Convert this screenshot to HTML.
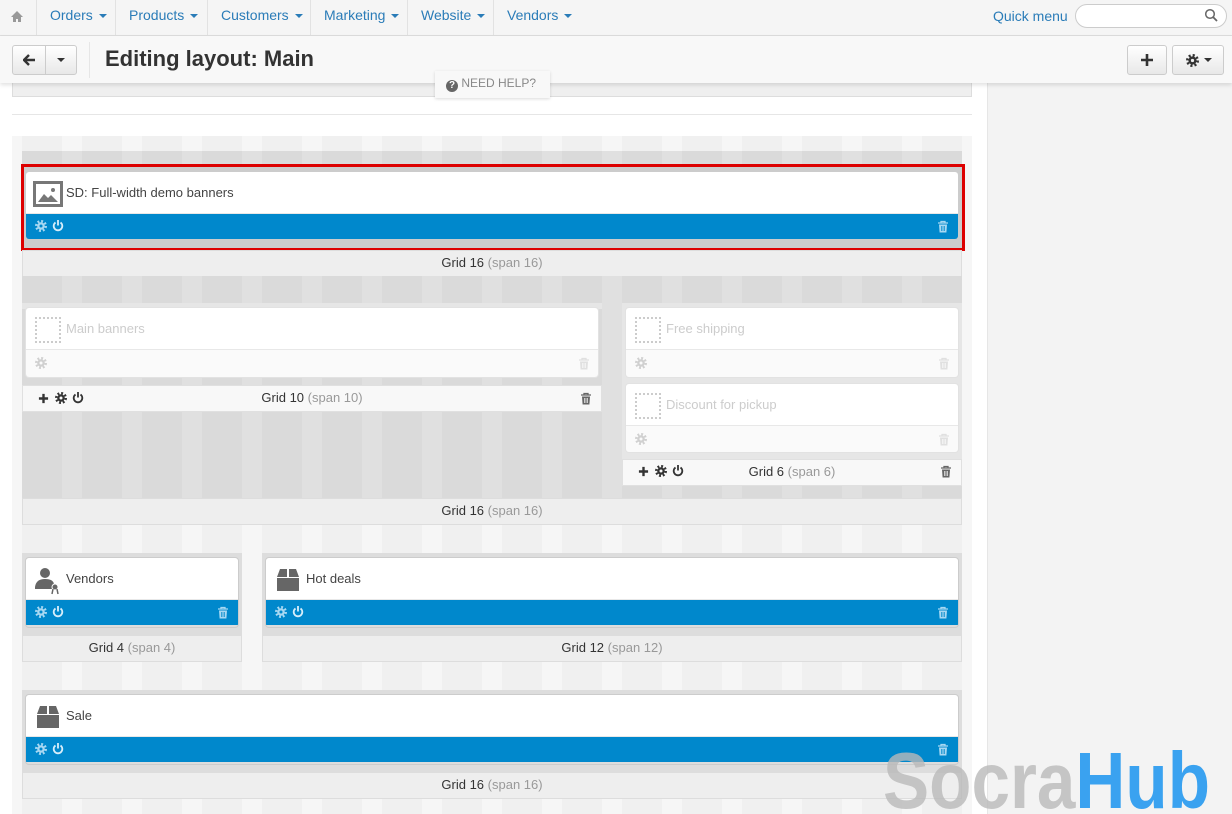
<!DOCTYPE html>
<html><head><meta charset="utf-8"><style>
*{box-sizing:border-box;margin:0;padding:0}
body{width:1232px;height:814px;overflow:hidden;font-family:"Liberation Sans",sans-serif;font-size:13px;color:#333;background:#fff;position:relative}
.abs{position:absolute}
.nav{left:0;top:0;width:1232px;height:36px;background:#f5f5f5;border-bottom:1px solid #ddd}
.nav .it{position:absolute;top:0;height:35px;line-height:31px;color:#2a7cb8;font-size:14px;border-left:1px solid #e2e2e2;padding:0 13px}
.caret{display:inline-block;width:0;height:0;border-left:4px solid transparent;border-right:4px solid transparent;border-top:4px solid #2a7cb8;vertical-align:middle;margin-left:6px}
.tb{left:0;top:36px;width:1232px;height:47px;background:#f8f8f8;box-shadow:0 2px 4px rgba(0,0,0,.12);z-index:3}
.btn{position:absolute;border:1px solid #ccc;border-radius:3px;background:linear-gradient(#fff,#e8e8e8);height:30px}
.side{left:987px;top:83px;width:245px;height:731px;background:#f3f3f3;border-left:1px solid #e6e6e6}
.stripes{background:repeating-linear-gradient(90deg,#f0f0f0 0 40px,#f6f6f6 40px 60px)}
.dstripes{background:repeating-linear-gradient(90deg,#dadada 0 40px,#e0e0e0 40px 60px)}
.lbl{position:absolute;background:#eee;border:1px solid #ddd;text-align:center;font-size:13px;color:#333;line-height:23px;height:27px}
.lbl span{color:#999}
.blk{position:absolute;border-radius:3px;overflow:hidden;box-shadow:0 0 0 1px #ccc}
.blk .hd{background:#fff;height:42px;position:relative;border-bottom:1px solid #e8e8e8}
.blk .hd .t{position:absolute;left:40px;top:13px;font-size:13px;color:#444}
.blk .ft{background:#0088cc;height:25px;position:relative}
.blk.dis{box-shadow:0 0 0 1px #e2e2e2}
.blk.dis .t{color:#ccc}
.blk.dis .ft{background:#fafafa;height:27px}
.dash{position:absolute;left:9px;top:9px;width:26px;height:26px;border:2px dotted #ccc}
.ic{position:absolute;top:6px}
.gl{position:absolute;background:#f8f8f8;border:1px solid #e0e0e0;height:27px;line-height:23px;text-align:center}
.gl span{color:#999}
svg.i{position:absolute}
</style></head><body>
<div class="abs nav">
 <svg class="abs" style="left:10px;top:10px" width="14" height="13" viewBox="0 0 14 13"><path d="M7 1L1 7h2v5h3V9h2v3h3V7h2z" fill="#999"/></svg>
 <div class="it" style="left:36px">Orders<i class="caret"></i></div>
 <div class="it" style="left:115px">Products<i class="caret"></i></div>
 <div class="it" style="left:207px">Customers<i class="caret"></i></div>
 <div class="it" style="left:310px">Marketing<i class="caret"></i></div>
 <div class="it" style="left:407px">Website<i class="caret"></i></div>
 <div class="it" style="left:493px">Vendors<i class="caret"></i></div>
 <div class="abs" style="left:993px;top:8px;color:#2a7cb8;font-size:14px">Quick menu</div>
 <div class="abs" style="left:1075px;top:4px;width:152px;height:24px;border:1px solid #ccc;border-radius:12px;background:#fff"></div>
 <svg class="abs" style="left:1204px;top:8px" width="14" height="14" viewBox="0 0 14 14"><circle cx="6" cy="6" r="4.3" fill="none" stroke="#666" stroke-width="1.5"/><path d="M9 9l4 4" stroke="#666" stroke-width="1.8"/></svg>
</div>
<div class="abs tb">
 <div class="btn" style="left:12px;top:9px;width:34px;border-radius:3px 0 0 3px"><svg style="position:absolute;left:10px;top:8px" width="13" height="12" viewBox="0 0 13 12"><path d="M6 1L1 6l5 5M1 6h11" stroke="#333" stroke-width="2.4" fill="none"/></svg></div>
 <div class="btn" style="left:45px;top:9px;width:32px;border-radius:0 3px 3px 0"><i class="caret" style="border-top-color:#333;position:absolute;left:11px;top:12px;margin:0"></i></div>
 <div class="abs" style="left:89px;top:6px;width:1px;height:36px;background:#e6e6e6"></div>
 <div class="abs" style="left:105px;top:10px;font-size:22px;font-weight:bold;color:#333">Editing layout: Main</div>
 <div class="btn" style="left:1127px;top:9px;width:40px"><svg style="position:absolute;left:13px;top:8px" width="12" height="12"><path d="M6 0v12M0 6h12" stroke="#333" stroke-width="2.6"/></svg></div>
 <div class="btn" style="left:1172px;top:9px;width:52px"><svg style="position:absolute;left:13px;top:8px" width="13" height="13" viewBox="0 0 12 12"><circle cx="6" cy="6" r="4.8" fill="none" stroke="#333" stroke-width="2.4" stroke-dasharray="1.9 1.87"/><circle cx="6" cy="6" r="3.8" fill="#333"/><circle cx="6" cy="6" r="1.5" fill="#eee"/></svg><i class="caret" style="border-top-color:#333;position:absolute;left:31px;top:12px;margin:0"></i></div>
</div>
<div class="abs" style="left:435px;top:71px;width:115px;height:27px;background:#f8f8f8;box-shadow:0 1px 3px rgba(0,0,0,.15);z-index:4;font-size:12px;color:#888;line-height:24px;padding-left:11px"><span style="display:inline-block;width:12px;height:12px;border-radius:6px;background:#666;color:#fff;font-size:10px;font-weight:bold;text-align:center;line-height:12px;vertical-align:-1px">?</span> NEED HELP?</div>
<div class="abs side"></div>
<div class="abs" style="left:12px;top:83px;width:960px;height:14px;background:#efefef;border:1px solid #ddd;border-top:0"></div>
<div class="abs" style="left:12px;top:114px;width:960px;height:1px;background:#e6e6e6"></div>
<div class="abs stripes" style="left:12px;top:136px;width:960px;height:678px;background-position:10px 0"></div>

<svg width="0" height="0" style="position:absolute">
<defs>
<symbol id="g" viewBox="0 0 12 12"><circle cx="6" cy="6" r="4.8" fill="none" stroke="currentColor" stroke-width="2.4" stroke-dasharray="1.9 1.87"/><circle cx="6" cy="6" r="3.8" fill="currentColor"/><circle cx="6" cy="6" r="1.5" fill="var(--bg)"/></symbol>
<symbol id="p" viewBox="0 0 12 12"><path d="M3.5 3A4.3 4.3 0 1 0 8.5 3" fill="none" stroke="currentColor" stroke-width="1.8"/><path d="M6 0.5v5.5" stroke="currentColor" stroke-width="1.8"/></symbol>
<symbol id="t" viewBox="0 0 12 12"><path d="M1 2.5h10M4 2.5V1h4v1.5" stroke="currentColor" stroke-width="1.3" fill="none"/><path d="M2 4h8l-.6 8H2.6z" fill="currentColor"/><path d="M4.5 5.5v5M6 5.5v5M7.5 5.5v5" stroke="var(--bg)" stroke-width=".7"/></symbol>
<symbol id="pl" viewBox="0 0 12 12"><path d="M6 1v10M1 6h10" stroke="currentColor" stroke-width="2.6"/></symbol>
</defs></svg>

<!-- row1 -->
<div class="abs dstripes" style="left:22px;top:151px;width:940px;height:100px"></div>
<div class="abs" style="left:21px;top:164px;width:944px;height:87px;border:3px solid #d00;background:#ccc"></div>
<div class="blk" style="left:26px;top:172px;width:932px;height:67px;box-shadow:none">
 <div class="hd"><svg class="ic" style="left:7px;top:9px" width="30" height="26" viewBox="0 0 30 26"><rect x="1.5" y="1.5" width="27" height="23" fill="#fff" stroke="#777" stroke-width="3"/><path d="M5 21l6-8 4 4 3-3 7 7z" fill="#777"/><circle cx="20" cy="9" r="2" fill="#777"/></svg><span class="t">SD: Full-width demo banners</span></div>
 <div class="ft" style="color:#a8d8f2;--bg:#0088cc"><svg class="i" style="left:9px;top:6px" width="12" height="12"><use href="#g"/></svg><svg class="i" style="left:26px;top:5px;color:#d8eefa" width="12" height="13"><use href="#p"/></svg><svg class="i" style="left:911px;top:6px" width="12" height="13"><use href="#t"/></svg></div>
</div>
<div class="lbl" style="left:22px;top:250px;width:940px">Grid 16 <span>(span 16)</span></div>

<!-- row2 -->
<div class="abs dstripes" style="left:22px;top:276px;width:940px;height:223px"></div>
<div class="abs" style="left:22px;top:303px;width:580px;height:6px;background:#e6e6e6"></div>
<div class="blk dis" style="left:26px;top:308px;width:572px;height:69px"><div class="hd"><div class="dash"></div><span class="t">Main banners</span></div><div class="ft" style="color:#d0d0d0;--bg:#fafafa"><svg class="i" style="left:9px;top:7px" width="12" height="12"><use href="#g"/></svg><svg class="i" style="left:552px;top:7px;color:#e0e0e0" width="12" height="13"><use href="#t"/></svg></div></div>
<div class="gl" style="left:22px;top:385px;width:580px;color:#333;--bg:#f8f8f8">Grid 10 <span>(span 10)</span><svg class="i" style="left:15px;top:7px" width="11" height="11"><use href="#pl"/></svg><svg class="i" style="left:32px;top:6px" width="12" height="12"><use href="#g"/></svg><svg class="i" style="left:49px;top:5px" width="12" height="13"><use href="#p"/></svg><svg class="i" style="left:557px;top:6px;color:#666" width="12" height="13"><use href="#t"/></svg></div>
<div class="abs" style="left:622px;top:303px;width:340px;height:182px;background:#e6e6e6"></div>
<div class="blk dis" style="left:626px;top:308px;width:332px;height:69px"><div class="hd"><div class="dash"></div><span class="t">Free shipping</span></div><div class="ft" style="color:#d0d0d0;--bg:#fafafa"><svg class="i" style="left:9px;top:7px" width="12" height="12"><use href="#g"/></svg><svg class="i" style="left:312px;top:7px;color:#e0e0e0" width="12" height="13"><use href="#t"/></svg></div></div>
<div class="blk dis" style="left:626px;top:384px;width:332px;height:68px"><div class="hd"><div class="dash"></div><span class="t">Discount for pickup</span></div><div class="ft" style="color:#d0d0d0;--bg:#fafafa"><svg class="i" style="left:9px;top:7px" width="12" height="12"><use href="#g"/></svg><svg class="i" style="left:312px;top:7px;color:#e0e0e0" width="12" height="13"><use href="#t"/></svg></div></div>
<div class="gl" style="left:622px;top:459px;width:340px;color:#333;--bg:#f8f8f8">Grid 6 <span>(span 6)</span><svg class="i" style="left:15px;top:6px" width="11" height="11"><use href="#pl"/></svg><svg class="i" style="left:32px;top:5px" width="12" height="12"><use href="#g"/></svg><svg class="i" style="left:49px;top:4px" width="12" height="13"><use href="#p"/></svg><svg class="i" style="left:317px;top:5px;color:#666" width="12" height="13"><use href="#t"/></svg></div>
<div class="lbl" style="left:22px;top:498px;width:940px">Grid 16 <span>(span 16)</span></div>

<!-- row3 -->
<div class="abs" style="left:22px;top:553px;width:220px;height:83px;background:#ddd"></div>
<div class="blk" style="left:26px;top:558px;width:212px;height:69px"><div class="hd"><svg class="ic" style="left:8px;top:9px" width="26" height="28" viewBox="0 0 26 28"><circle cx="11" cy="6" r="5" fill="#666"/><path d="M1 20q1-8 10-8t9 6v4H1z" fill="#666"/><circle cx="21" cy="20" r="3" fill="#666" stroke="#fff"/><path d="M19 22l-1 5M23 22l1 5" stroke="#666" stroke-width="1.5"/></svg><span class="t">Vendors</span></div><div class="ft" style="color:#a8d8f2;--bg:#0088cc"><svg class="i" style="left:9px;top:6px" width="12" height="12"><use href="#g"/></svg><svg class="i" style="left:26px;top:5px;color:#d8eefa" width="12" height="13"><use href="#p"/></svg><svg class="i" style="left:191px;top:6px" width="12" height="13"><use href="#t"/></svg></div></div>
<div class="lbl" style="left:22px;top:635px;width:220px">Grid 4 <span>(span 4)</span></div>
<div class="abs" style="left:262px;top:553px;width:700px;height:83px;background:#ddd"></div>
<div class="blk" style="left:266px;top:558px;width:692px;height:69px"><div class="hd"><svg class="ic" style="left:10px;top:10px" width="24" height="24" viewBox="0 0 24 24"><path d="M1 9l3-8h7v8zM13 9V1h7l3 8z" fill="#666"/><rect x="1" y="10" width="22" height="13" fill="#666"/></svg><span class="t">Hot deals</span></div><div class="ft" style="color:#a8d8f2;--bg:#0088cc"><svg class="i" style="left:9px;top:6px" width="12" height="12"><use href="#g"/></svg><svg class="i" style="left:26px;top:5px;color:#d8eefa" width="12" height="13"><use href="#p"/></svg><svg class="i" style="left:671px;top:6px" width="12" height="13"><use href="#t"/></svg></div></div>
<div class="lbl" style="left:262px;top:635px;width:700px">Grid 12 <span>(span 12)</span></div>

<!-- row4 -->
<div class="abs" style="left:22px;top:690px;width:940px;height:83px;background:#ddd"></div>
<div class="blk" style="left:26px;top:695px;width:932px;height:69px"><div class="hd"><svg class="ic" style="left:10px;top:10px" width="24" height="24" viewBox="0 0 24 24"><path d="M1 9l3-8h7v8zM13 9V1h7l3 8z" fill="#666"/><rect x="1" y="10" width="22" height="13" fill="#666"/></svg><span class="t">Sale</span></div><div class="ft" style="color:#a8d8f2;--bg:#0088cc"><svg class="i" style="left:9px;top:6px" width="12" height="12"><use href="#g"/></svg><svg class="i" style="left:26px;top:5px;color:#d8eefa" width="12" height="13"><use href="#p"/></svg><svg class="i" style="left:911px;top:6px" width="12" height="13"><use href="#t"/></svg></div></div>
<div class="lbl" style="left:22px;top:772px;width:940px">Grid 16 <span>(span 16)</span></div>

<svg class="abs" style="left:880px;top:735px;z-index:9" width="335" height="79" viewBox="0 0 335 79"><text x="3" y="73" font-family="Liberation Sans, sans-serif" font-weight="bold" font-size="80" textLength="327" lengthAdjust="spacingAndGlyphs"><tspan fill="rgba(185,185,185,.8)">Socra</tspan><tspan fill="#3aa2f0">Hub</tspan></text></svg>
</body></html>
